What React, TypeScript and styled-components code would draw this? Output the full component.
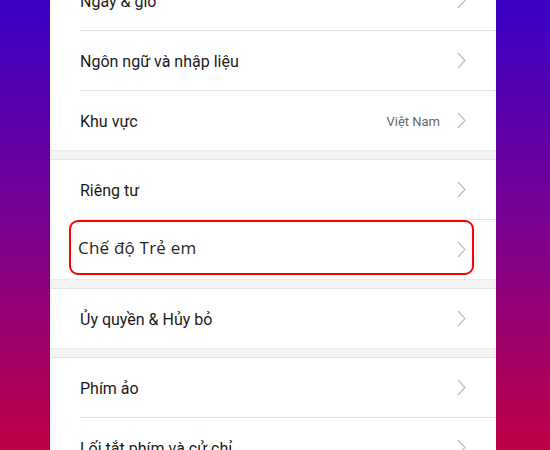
import React from "react";
import styled, { createGlobalStyle } from "styled-components";

const Global = createGlobalStyle`
  html, body { margin: 0; padding: 0; }
  body {
    width: 550px;
    height: 450px;
    overflow: hidden;
    background: linear-gradient(to bottom, #3a00c6 0%, #7a0090 50%, #c00046 100%);
    font-family: Roboto, "Noto Sans", sans-serif;
  }
`;

const Page = styled.div`
  width: 550px;
  height: 450px;
  display: flex;
  justify-content: flex-start;
  overflow: hidden;
`;

const Panel = styled.div`
  margin-left: 50px;
  width: 446px;
  height: 450px;
  background: #ffffff;
  overflow: hidden;
`;

const List = styled.div`
  margin-top: -29px;
  display: flex;
  flex-direction: column;
`;

const Group = styled.div`
  display: flex;
  flex-direction: column;
`;

const Gap = styled.div`
  height: 8px;
  background: #f4f4f4;
  border-top: 1px solid #ececec;
  border-bottom: 1px solid #e6e6e6;
`;

const Row = styled.div<{ $last?: boolean }>`
  position: relative;
  height: 59px;
  margin-left: 30px;
  padding-right: 30px;
  display: flex;
  align-items: center;
  border-bottom: ${(p) => (p.$last ? "none" : "1px solid #e4e4e4")};
`;

const Label = styled.span<{ $mark?: boolean }>`
  flex: 1;
  font-family: ${(p) => (p.$mark ? '"Open Sans", "Noto Sans", sans-serif' : 'Roboto, "Noto Sans", sans-serif')};
  font-size: ${(p) => (p.$mark ? "17px" : "16px")};
  font-weight: ${(p) => (p.$mark ? 500 : 400)};
  letter-spacing: ${(p) => (p.$mark ? "0.2px" : "0")};
  color: ${(p) => (p.$mark ? "#262626" : "#1a1a1a")};
  margin-left: ${(p) => (p.$mark ? "-2px" : "0")};
  margin-top: ${(p) => (p.$mark ? "-5px" : "2px")};
`;

const Value = styled.span`
  font-size: 13px;
  color: #666666;
  margin-right: 17px;
  margin-top: 2px;
`;

const Mark = styled.div`
  position: absolute;
  left: -11px;
  right: 22px;
  top: 0;
  height: 55px;
  border: 2px solid #ff0000;
  border-radius: 9px;
  box-sizing: border-box;
  pointer-events: none;
`;

const Chevron = () => (
  <svg width="9" height="17" viewBox="0 0 9 17" fill="none">
    <path d="M1 1 L8 8.5 L1 16" stroke="#bdbdbd" strokeWidth="1.2" strokeLinejoin="miter" />
  </svg>
);

type Item = { label: string; value?: string; mark?: boolean };

const groups: Item[][] = [
  [
    { label: "Ngày & giờ" },
    { label: "Ngôn ngữ và nhập liệu" },
    { label: "Khu vực", value: "Việt Nam" },
  ],
  [{ label: "Riêng tư" }, { label: "Chế độ Trẻ em", mark: true }],
  [{ label: "Ủy quyền & Hủy bỏ" }],
  [{ label: "Phím ảo" }, { label: "Lối tắt phím và cử chỉ" }],
];

export default function App() {
  return (
    <>
      <Global />
      <Page>
        <Panel>
          <List>
            {groups.map((g, gi) => (
              <React.Fragment key={gi}>
                {gi > 0 && <Gap />}
                <Group>
                  {g.map((it, i) => (
                    <Row key={it.label} $last={i === g.length - 1}>
                      <Label $mark={it.mark}>{it.label}</Label>
                      {it.value && <Value>{it.value}</Value>}
                      <Chevron />
                      {it.mark && <Mark />}
                    </Row>
                  ))}
                </Group>
              </React.Fragment>
            ))}
          </List>
        </Panel>
      </Page>
    </>
  );
}
